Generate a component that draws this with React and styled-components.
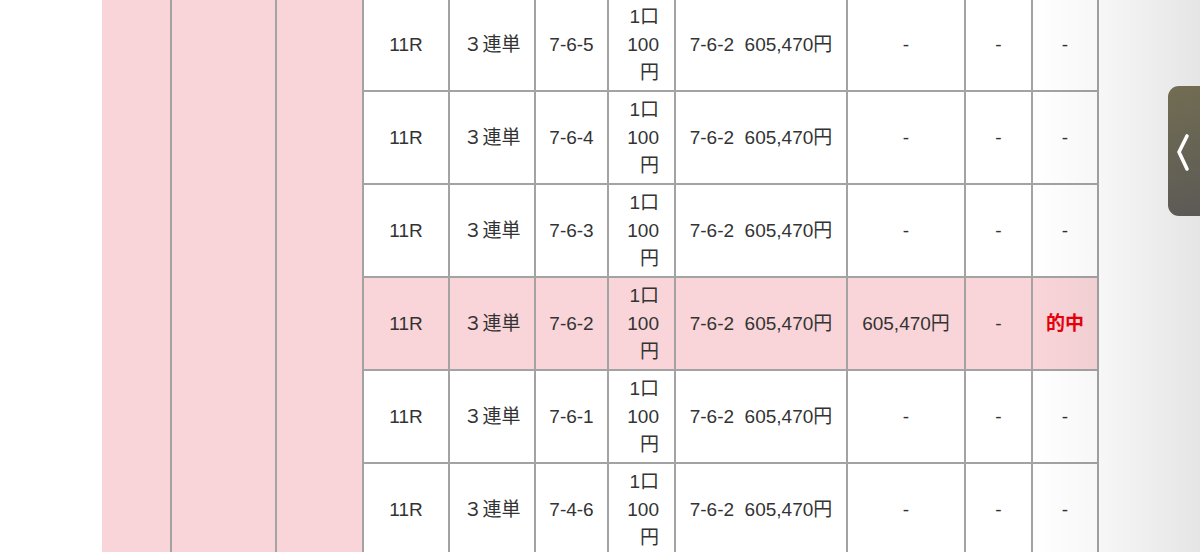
import React from 'react'
import styled, { createGlobalStyle } from 'styled-components';

const GlobalStyle = createGlobalStyle`
html, body{
    margin: 0;
    padding: 0;
    background: #fff;
    overflow: hidden;
}
body{
    font-family: "Liberation Sans", "Noto Sans CJK JP", sans-serif;
}
`

const rows = [
    { kumi: "7-6-5" },
    { kumi: "7-6-4" },
    { kumi: "7-6-3" },
    { kumi: "7-6-2", hit: true },
    { kumi: "7-6-1" },
    { kumi: "7-4-6" },
];

const App = () => {
  return (
    <>
    <GlobalStyle />
    <Page>
        <Sheet>
            <Merged $col={1} />
            <Merged $col={2} />
            <Merged $col={3} />
            {rows.map((r, i) => (
                <React.Fragment key={i}>
                    <Cell $hit={r.hit}>11R</Cell>
                    <Cell $hit={r.hit}>３連単</Cell>
                    <Cell $hit={r.hit}>{r.kumi}</Cell>
                    <Cell $hit={r.hit} $right>
                        <Stack>1口100円</Stack>
                    </Cell>
                    <Cell $hit={r.hit}>{"7-6-2\u00a0\u00a0605,470円"}</Cell>
                    <Cell $hit={r.hit}>{r.hit ? "605,470円" : "-"}</Cell>
                    <Cell $hit={r.hit}>-</Cell>
                    <Cell $hit={r.hit}>{r.hit ? <Hit>的中</Hit> : "-"}</Cell>
                </React.Fragment>
            ))}
        </Sheet>
        <EdgeShade />
        <Handle>
            <svg width="16" height="40" viewBox="0 0 16 40">
                <path d="M12 3 L4 19 L12 36" fill="none" stroke="#fff" strokeWidth="3.6" strokeLinecap="round" strokeLinejoin="round" />
            </svg>
        </Handle>
    </Page>
    </>
  )
}

export default App;

const Page = styled.div`
position: relative;
width: 1200px;
height: 552px;
overflow: hidden;
background: #fff;
padding-left: 102px;
box-sizing: border-box;
`

const Sheet = styled.div`
display: grid;
grid-template-columns: 70px 105px 87px 86px 86px 73px 67px 172px 118px 67px 66px;
grid-auto-rows: 93px;
margin-top: -1px;
color: #333;
font-size: 19px;
`

const Merged = styled.div`
grid-column: ${p => p.$col};
grid-row: 1 / span 6;
background: #f9d5d9;
border-right: 2px solid #a3a3a3;
`

const Cell = styled.div`
display: flex;
align-items: center;
justify-content: ${p => p.$right ? "flex-end" : "center"};
padding: 0 ${p => p.$right ? "15px" : "4px"} 0 4px;
background: ${p => p.$hit ? "#f9d5d9" : "#fff"};
border-right: 2px solid #a3a3a3;
border-bottom: 2px solid #a3a3a3;
line-height: 28px;
white-space: nowrap;
text-align: center;
`

const Stack = styled.div`
width: 33px;
white-space: normal;
text-align: right;
`

const Hit = styled.span`
color: #e8000b;
font-weight: bold;
`

const EdgeShade = styled.div`
position: absolute;
top: 0;
right: 0;
width: 170px;
height: 100%;
pointer-events: none;
background: linear-gradient(to right, rgba(0,0,0,0), rgba(0,0,0,0.03) 40%, rgba(0,0,0,0.1));
`

const Handle = styled.div`
position: absolute;
top: 86px;
left: 1168px;
width: 44px;
height: 130px;
border-radius: 11px;
background: linear-gradient(160deg, #726d52, #5b5956);
display: flex;
align-items: center;
padding-left: 7px;
box-sizing: border-box;
svg{
    margin-top: 4px;
}
`
